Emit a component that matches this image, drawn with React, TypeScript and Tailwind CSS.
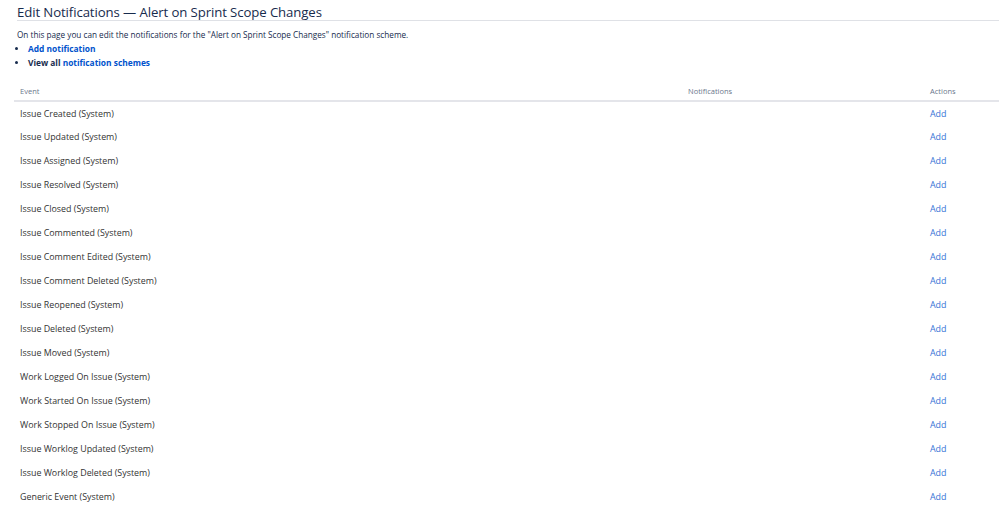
const events = [
  "Issue Created (System)",
  "Issue Updated (System)",
  "Issue Assigned (System)",
  "Issue Resolved (System)",
  "Issue Closed (System)",
  "Issue Commented (System)",
  "Issue Comment Edited (System)",
  "Issue Comment Deleted (System)",
  "Issue Reopened (System)",
  "Issue Deleted (System)",
  "Issue Moved (System)",
  "Work Logged On Issue (System)",
  "Work Started On Issue (System)",
  "Work Stopped On Issue (System)",
  "Issue Worklog Updated (System)",
  "Issue Worklog Deleted (System)",
  "Generic Event (System)",
];

export default function App() {
  return (
    <div
      className="min-h-screen bg-white pl-[14px] text-[#172b4d]"
      style={{ fontFamily: '"Open Sans", "Noto Sans", sans-serif' }}
    >
      <div className="pl-[3px] pt-[4px]">
        <h1 className="border-b border-[#dfe1e6] text-[13.2px] font-medium leading-[16px] tracking-[-0.1px]">
          Edit Notifications — Alert on Sprint Scope Changes
        </h1>
        <p className="mt-[8px] text-[8.2px] leading-[12px] text-[#172b4d]">
          On this page you can edit the notifications for the "Alert on Sprint Scope Changes" notification scheme.
        </p>
        <ul className="mt-[1px] list-disc pl-[11px] text-[8.4px] font-bold leading-[13.5px]">
          <li>
            <a href="#" className="text-[#0052cc]">Add notification</a>
          </li>
          <li>
            View all <a href="#" className="text-[#0052cc]">notification schemes</a>
          </li>
        </ul>
      </div>
      <table className="mt-[14px] w-full border-collapse text-left">
        <thead>
          <tr className="border-b-2 border-[#e4e5ea] text-[7.5px] text-[#6b778c]">
            <th className="h-[18px] pl-[6px] font-normal">Event</th>
            <th className="w-[242px] font-normal">Notifications</th>
            <th className="w-[69px] font-normal">Actions</th>
          </tr>
        </thead>
        <tbody className="text-[8.9px] text-[#333]">
          {events.map((e) => (
            <tr key={e} className="h-[24px]">
              <td className="pl-[6px]">{e}</td>
              <td></td>
              <td>
                <a href="#" className="text-[#3572d6]">Add</a>
              </td>
            </tr>
          ))}
        </tbody>
      </table>
    </div>
  );
}
